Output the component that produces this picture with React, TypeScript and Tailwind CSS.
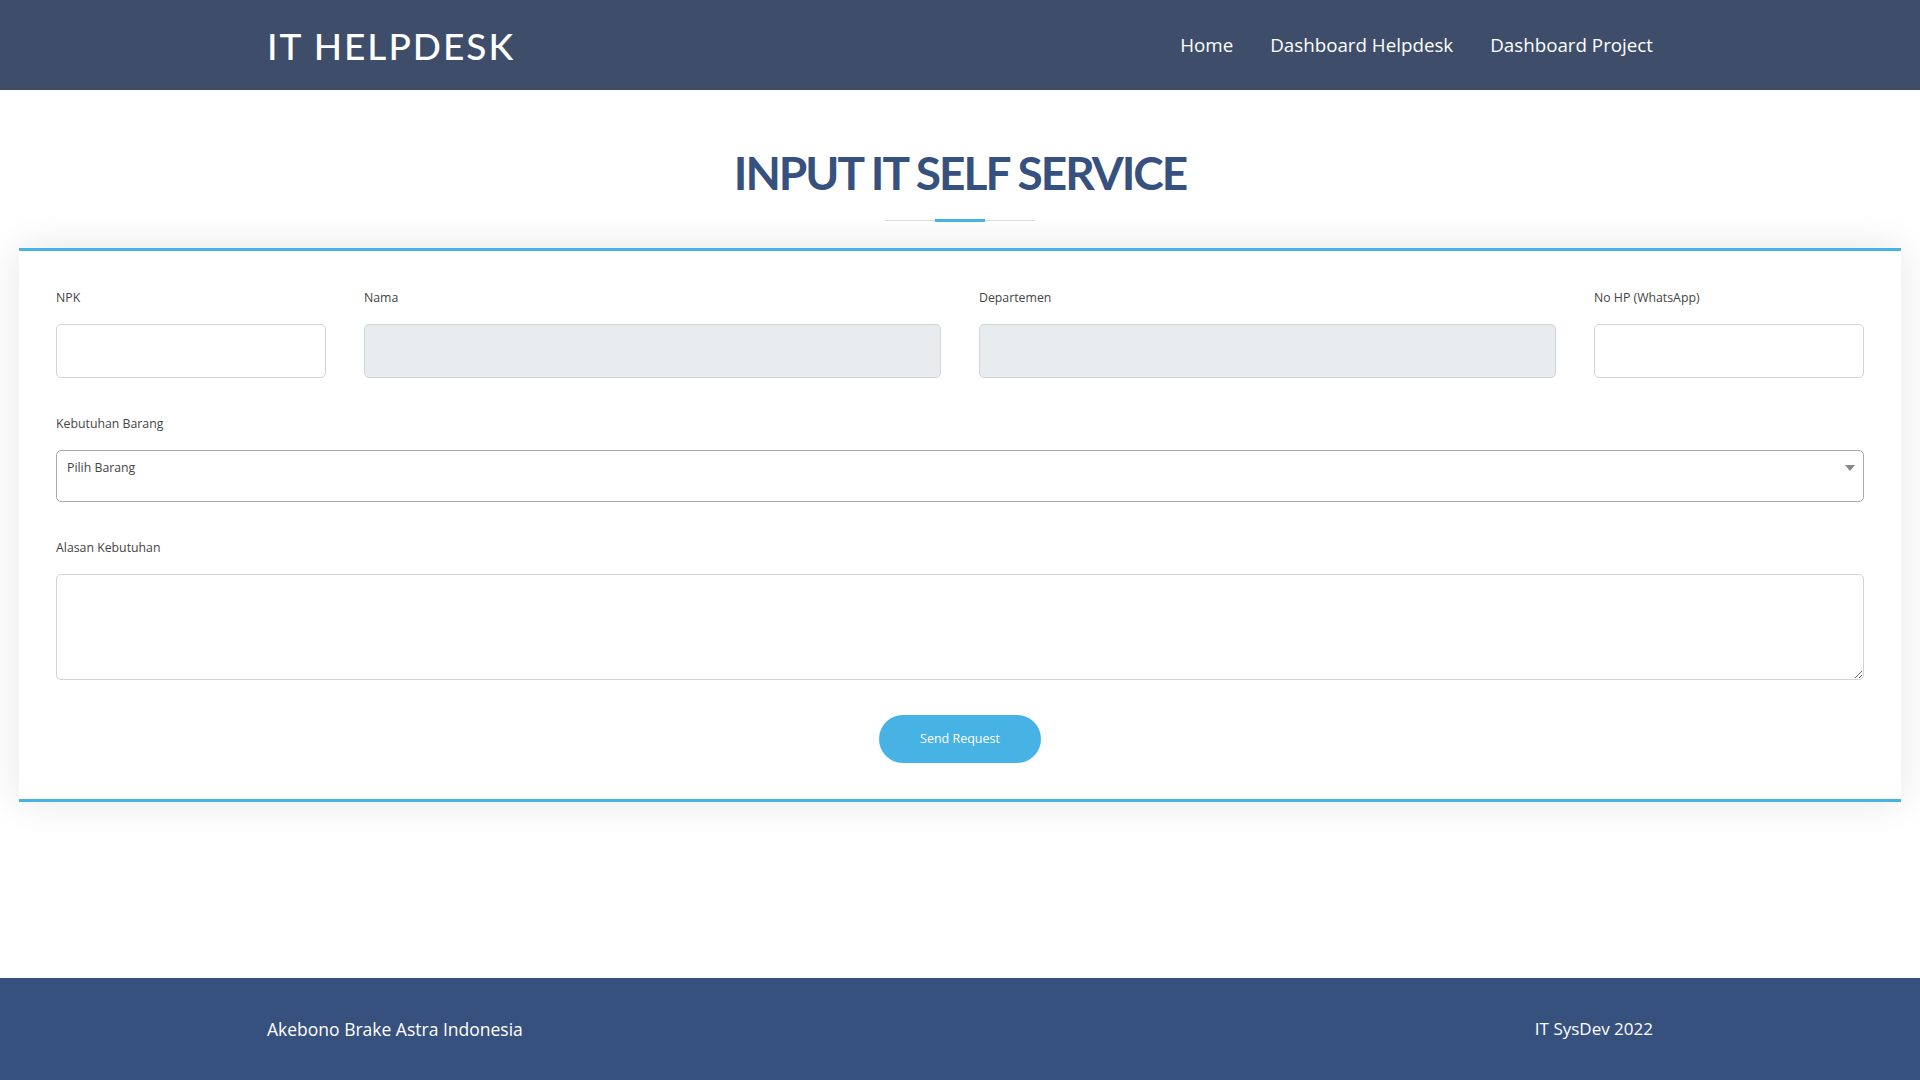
import React from "react";

const open = { fontFamily: '"Open Sans", "Noto Sans", sans-serif' };
const head = { fontFamily: 'Lato, "Noto Sans", sans-serif' };

function Label({ children }: { children: React.ReactNode }) {
  return (
    <label className="block h-[18px] leading-[18px] mb-[17px] text-[12.3px] text-[#444444]">
      {children}
    </label>
  );
}

export default function App() {
  return (
    <div className="min-h-screen flex flex-col bg-white" style={open}>
      <header className="h-[90px] bg-[#3e4e6a] shrink-0">
        <div className="mx-auto w-[1386px] h-full flex items-center justify-between">
          <h1
            className="text-[37px] leading-none font-medium tracking-[2px] text-white uppercase"
            style={head}
          >
            IT HELPDESK
          </h1>
          <nav className="flex items-center gap-[37px] text-[18.75px] font-medium text-white">
            <a href="#">Home</a>
            <a href="#">Dashboard Helpdesk</a>
            <a href="#">Dashboard Project</a>
          </nav>
        </div>
      </header>

      <main className="flex-1 pt-[53px]">
        <h2
          className="text-center text-[46px] leading-[60px] font-bold uppercase text-[#37517e] tracking-[-2px]"
          style={head}
        >
          INPUT IT SELF SERVICE
        </h2>
        <div className="mt-[16px] mx-auto w-[150px] h-[3px] flex items-center">
          <div className="flex-1 h-px bg-[#dddddd]" />
          <div className="w-[50px] h-[3px] bg-[#47b2e4]" />
          <div className="flex-1 h-px bg-[#dddddd]" />
        </div>

        <div className="mx-[19px] mt-[26px] bg-white border-t-[3px] border-b-[3px] border-[#47b2e4] shadow-[0_0_37px_rgba(214,215,216,0.6)] px-[37px] pt-[38px] pb-[36px]">
          <div className="grid grid-cols-[270px_1fr_1fr_270px] gap-x-[38px]">
            <div>
              <Label>NPK</Label>
              <input className="w-full h-[54px] border border-[#ced4da] rounded-[5px] bg-white" />
            </div>
            <div>
              <Label>Nama</Label>
              <input disabled className="w-full h-[54px] border border-[#ced4da] rounded-[5px] bg-[#e9ecef]" />
            </div>
            <div>
              <Label>Departemen</Label>
              <input disabled className="w-full h-[54px] border border-[#ced4da] rounded-[5px] bg-[#e9ecef]" />
            </div>
            <div>
              <Label>No HP (WhatsApp)</Label>
              <input className="w-full h-[54px] border border-[#ced4da] rounded-[5px] bg-white" />
            </div>
          </div>

          <div className="mt-[37px]">
            <Label>Kebutuhan Barang</Label>
            <div className="relative h-[52px] border border-[#aaaaaa] rounded-[5px] bg-white pl-[10px] pr-[30px]">
              <span className="block leading-[34px] text-[12.3px] text-[#444444]">Pilih Barang</span>
              <span className="absolute right-[8px] top-[14px] w-0 h-0 border-l-[5px] border-r-[5px] border-t-[6px] border-l-transparent border-r-transparent border-t-[#888888]" />
            </div>
          </div>

          <div className="mt-[37px]">
            <Label>Alasan Kebutuhan</Label>
            <textarea className="block w-full h-[106px] border border-[#ced4da] rounded-[5px] bg-white" />
          </div>

          <div className="mt-[35px] flex justify-center">
            <button className="w-[162px] h-[48px] rounded-full bg-[#47b2e4] text-white text-[12.5px]">
              Send Request
            </button>
          </div>
        </div>
      </main>

      <footer className="h-[102px] bg-[#37517e] shrink-0">
        <div className="mx-auto w-[1386px] h-full flex items-center justify-between text-[17.5px] text-white">
          <span>Akebono Brake Astra Indonesia</span>
          <span className="text-[17px]">IT SysDev 2022</span>
        </div>
      </footer>
    </div>
  );
}
